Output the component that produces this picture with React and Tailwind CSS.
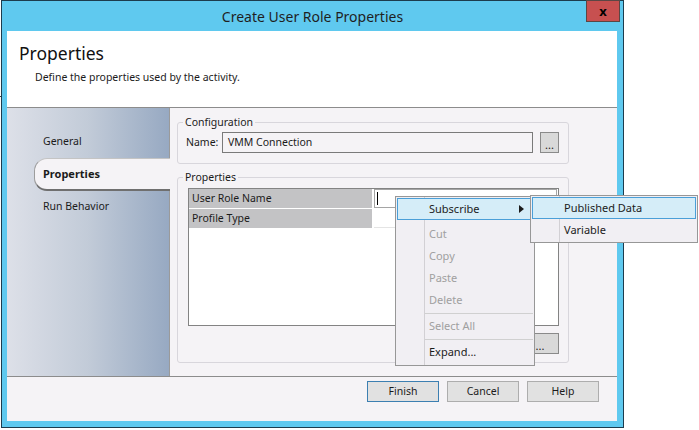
export default function App() {
  const Arrow = () => (
    <svg width="5" height="8" viewBox="0 0 5 8" className="block">
      <polygon points="0,0 5,4 0,8" fill="#1b1b1b" />
    </svg>
  );
  return (
    <div className="relative w-[699px] h-[430px] overflow-hidden bg-white font-['Noto_Sans',sans-serif] text-[10.5px] text-[#1b1b1b]">
      <div className="absolute left-0 top-[96px] h-[1px] w-[3px] bg-[#3a3a3a]" />
      <div className="relative ml-[1px] flex h-[428px] w-[623px] flex-col border border-[#1c3c4e] bg-[#5fc9ef]">
        <div className="flex h-[30px] items-center justify-center text-[14px] text-[#1f1f1f]">
          Create User Role Properties
        </div>
        <div className="absolute right-[3px] top-[-1px] flex h-[22px] w-[34px] items-center justify-center border border-[#5b4644] bg-[#c75050] text-[13px] font-bold leading-none text-black">
          x
        </div>
        <div className="mb-[6px] ml-[5px] mr-[6px] flex flex-1 flex-col bg-[#f5f3f6]">
          {/* header */}
          <div className="h-[77px] border-b border-[#8c8c8c] bg-white pl-[12px] pt-[10px]">
            <div className="text-[17.5px] leading-[24px] text-[#111]">Properties</div>
            <div className="ml-[16px] mt-[5px] text-[10.5px] leading-[14px] text-[#1b1b1b]">
              Define the properties used by the activity.
            </div>
          </div>
          {/* middle */}
          <div className="flex h-[268px]">
            <div className="flex w-[163px] flex-col border-r border-[#9a9a9a] bg-gradient-to-r from-[#dde0e8] via-[#c2cbd8] to-[#97a9c2] pt-[25px]">
              <div className="flex h-[18px] items-center pl-[36px]">General</div>
              <div className="relative z-10 mr-[-1px] mt-[7px] ml-[27px] flex h-[33px] items-center rounded-l-[13px] border-b-2 border-l border-t border-b-[#6f6f6f] border-l-[#9c9c9c] border-t-[#c4c4c4] bg-[#f5f3f6] pl-[8px] text-[11px] font-bold">
                Properties
              </div>
              <div className="mt-[7px] flex h-[18px] items-center pl-[36px]">Run Behavior</div>
            </div>
            <div className="flex flex-1 flex-col pl-[7px] pt-[7px]">
              <fieldset className="w-[392px] rounded-[3px] border border-[#d8d6dc] pb-[10px] pl-[8px] pr-[8px]">
                <legend className="ml-[-3px] px-[2px] leading-[15px]">Configuration</legend>
                <div className="mt-[2px] flex h-[21px] items-center">
                  <div className="w-[36px]">Name:</div>
                  <div className="flex h-[21px] w-[311px] items-center border border-[#7a7a7a] px-[5px]">
                    VMM Connection
                  </div>
                  <div className="ml-[7px] flex h-[21px] w-[19px] items-end justify-center border border-[#8a8a8a] bg-[#d9d9d9] pb-[2px] text-[11px] leading-[11px]">
                    ...
                  </div>
                </div>
              </fieldset>
              <fieldset className="mt-[6px] w-[392px] rounded-[3px] border border-[#d8d6dc] pb-[8px] pl-[10px] pr-[9px]">
                <legend className="ml-[-5px] px-[2px] leading-[15px]">Properties</legend>
                <div className="mt-[3px] flex h-[138px] flex-col gap-[1px] border border-[#838383] bg-white">
                  <div className="flex h-[19px]">
                    <div className="flex w-[183px] items-center bg-[#c3c3c5] pl-[3px]">User Role Name</div>
                    <div className="ml-[2px] flex w-[183px] items-center border border-[#a5a5a5] pl-[2px]">
                      <div className="h-[13px] w-[1px] bg-black" />
                    </div>
                  </div>
                  <div className="flex h-[19px]">
                    <div className="flex w-[183px] items-center bg-[#c3c3c5] pl-[3px]">Profile Type</div>
                    <div className="ml-[2px] w-[183px] border-b border-[#e4e4e4]" />
                  </div>
                </div>
                <div className="mt-[7px] flex justify-end">
                  <div className="flex h-[21px] w-[38px] items-end justify-center border border-[#8a8a8a] bg-[#d9d9d9] pb-[2px] text-[11px] leading-[11px]">
                    ...
                  </div>
                </div>
              </fieldset>
            </div>
          </div>
          {/* footer */}
          <div className="flex flex-1 items-start justify-end gap-[8px] border-t border-[#8c8c8c] pr-[18px] pt-[4px]">
            <div className="flex h-[21px] w-[72px] items-center justify-center border border-[#3c7fb1] bg-[#e1e1e1]">Finish</div>
            <div className="flex h-[21px] w-[72px] items-center justify-center border border-[#adadad] bg-[#e1e1e1]">Cancel</div>
            <div className="flex h-[21px] w-[72px] items-center justify-center border border-[#adadad] bg-[#e1e1e1]">Help</div>
          </div>
        </div>
      </div>

      {/* context menu */}
      <div className="absolute left-[395px] top-[196px] z-20 flex w-[140px] flex-col border border-[#979797] bg-[#f1eff3] px-[1px] pb-[2px] pt-[1px] text-[11px]">
        <div className="absolute bottom-0 left-[28px] top-0 w-[1px] bg-[#d2d0d4]" />
        <div className="relative flex h-[22px] items-center border border-[#4a9fd8] bg-[#d5edf8] pl-[31px] pr-[8px]">
          <span className="flex-1">Subscribe</span>
          <Arrow />
        </div>
        <div className="h-[3px]" />
        {['Cut', 'Copy', 'Paste', 'Delete'].map((t) => (
          <div key={t} className="relative flex h-[22px] items-center pl-[32px] text-[#a0a0a0]">{t}</div>
        ))}
        <div className="flex h-[4px] items-center pl-[28px]"><div className="h-[1px] flex-1 bg-[#d0d0d0]" /></div>
        <div className="relative flex h-[22px] items-center pl-[32px] text-[#a0a0a0]">Select All</div>
        <div className="flex h-[4px] items-center pl-[28px]"><div className="h-[1px] flex-1 bg-[#d0d0d0]" /></div>
        <div className="relative flex h-[22px] items-center pl-[32px]">Expand...</div>
      </div>

      {/* submenu */}
      <div className="absolute left-[530px] top-[195px] z-30 flex w-[168px] flex-col border border-[#979797] bg-[#f1eff3] p-[1px] text-[11px]">
        <div className="absolute bottom-0 left-[28px] top-0 w-[1px] bg-[#d2d0d4]" />
        <div className="relative flex h-[22px] items-center border border-[#4a9fd8] bg-[#d5edf8] pl-[31px]">Published Data</div>
        <div className="relative flex h-[22px] items-center pl-[32px]">Variable</div>
      </div>
    </div>
  );
}
